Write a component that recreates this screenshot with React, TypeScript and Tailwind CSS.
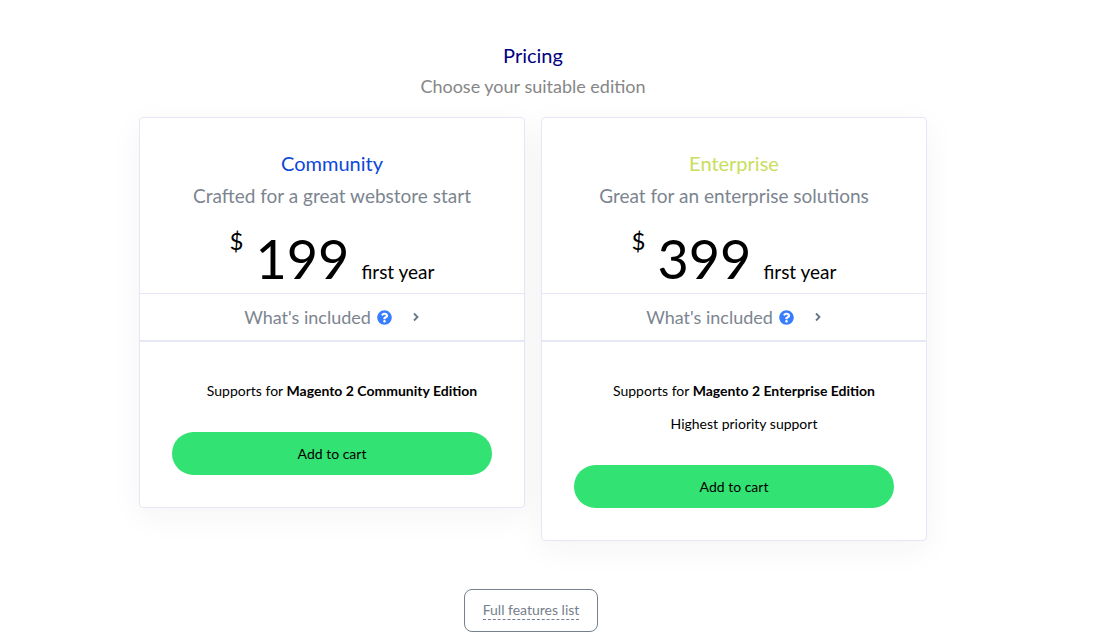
import React from 'react';
import { FaQuestionCircle } from 'react-icons/fa';

interface Edition {
  name: string;
  nameClass: string;
  tagline: string;
  price: number;
  platform: string;
  extras: string[];
}

const EDITIONS: Edition[] = [
  {
    name: 'Community',
    nameClass: 'text-[#0d47d9]',
    tagline: 'Crafted for a great webstore start',
    price: 199,
    platform: 'Magento 2 Community Edition',
    extras: [],
  },
  {
    name: 'Enterprise',
    nameClass: 'text-[#c8de5c]',
    tagline: 'Great for an enterprise solutions',
    price: 399,
    platform: 'Magento 2 Enterprise Edition',
    extras: ['Highest priority support'],
  },
];

const PricingCard: React.FC<{ edition: Edition }> = ({ edition }) => {
  const { name, nameClass, tagline, price, platform, extras } = edition;

  return (
    <article className="rounded border border-[#e5e8f4] bg-white text-center shadow-[0_8px_32px_rgba(30,40,60,0.05)]">
      {/* Title and price */}
      <header className="pt-[31px]">
        <h2 className={`text-[20px] leading-7 ${nameClass}`}>{name}</h2>
        <p className="mt-1 text-[19px] leading-[30px] text-[#7c858f]">{tagline}</p>
        <div className="flex h-[82px] items-baseline justify-center gap-3 pt-4">
          <span className="self-start text-[24px] leading-7">$</span>
          <span className="text-[54px] leading-[64px]">{price}</span>
          <span className="text-[19px]">first year</span>
        </div>
      </header>

      {/* Included features toggle */}
      <button
        type="button"
        className="flex h-[49px] w-full items-center justify-center border-t border-b-2 border-[#e5e8f4] text-[18px] text-[#7c858f]"
      >
        What's included
        <FaQuestionCircle size={15} className="ml-1.5 text-[#377dff]" />
        <svg width="8" height="10" viewBox="0 0 8 10" className="ml-5" fill="none" stroke="#677788" strokeWidth="1.8">
          <path d="M2 1.5 5.5 5 2 8.5" />
        </svg>
      </button>

      <div className="px-8 pt-8 pb-8">
        <ul className="pl-5 text-[14px] leading-[33px]">
          <li>
            Supports for <strong className="font-bold">{platform}</strong>
          </li>
          {extras.map((extra) => (
            <li key={extra}>{extra}</li>
          ))}
        </ul>
        <button type="button" className="mt-[25px] h-[43px] w-full rounded-full bg-[#32e272] text-[14px]">
          Add to cart
        </button>
      </div>
    </article>
  );
};

const App: React.FC = () => (
  <main className="bg-white pt-[39px] pr-7 pb-3 font-['Lato',sans-serif] text-black">
    <div className="mx-auto max-w-[788px]">
      <div className="text-center">
        <h1 className="text-[20px] leading-8 text-[#000080]">Pricing</h1>
        <p className="text-[18px] leading-[30px] text-[#868686]">Choose your suitable edition</p>
      </div>

      <section className="mt-4 grid grid-cols-2 items-start gap-4">
        {EDITIONS.map((edition) => (
          <PricingCard key={edition.name} edition={edition} />
        ))}
      </section>

      <div className="mt-12 flex justify-center pr-1">
        <a
          href="#features"
          className="flex h-[43px] items-center rounded-lg border border-[#75808c] px-[18px] text-[14px] text-[#75808c]"
        >
          <span className="border-b border-dashed border-[#75808c] leading-[18px]">Full features list</span>
        </a>
      </div>
    </div>
  </main>
);

export default App;
